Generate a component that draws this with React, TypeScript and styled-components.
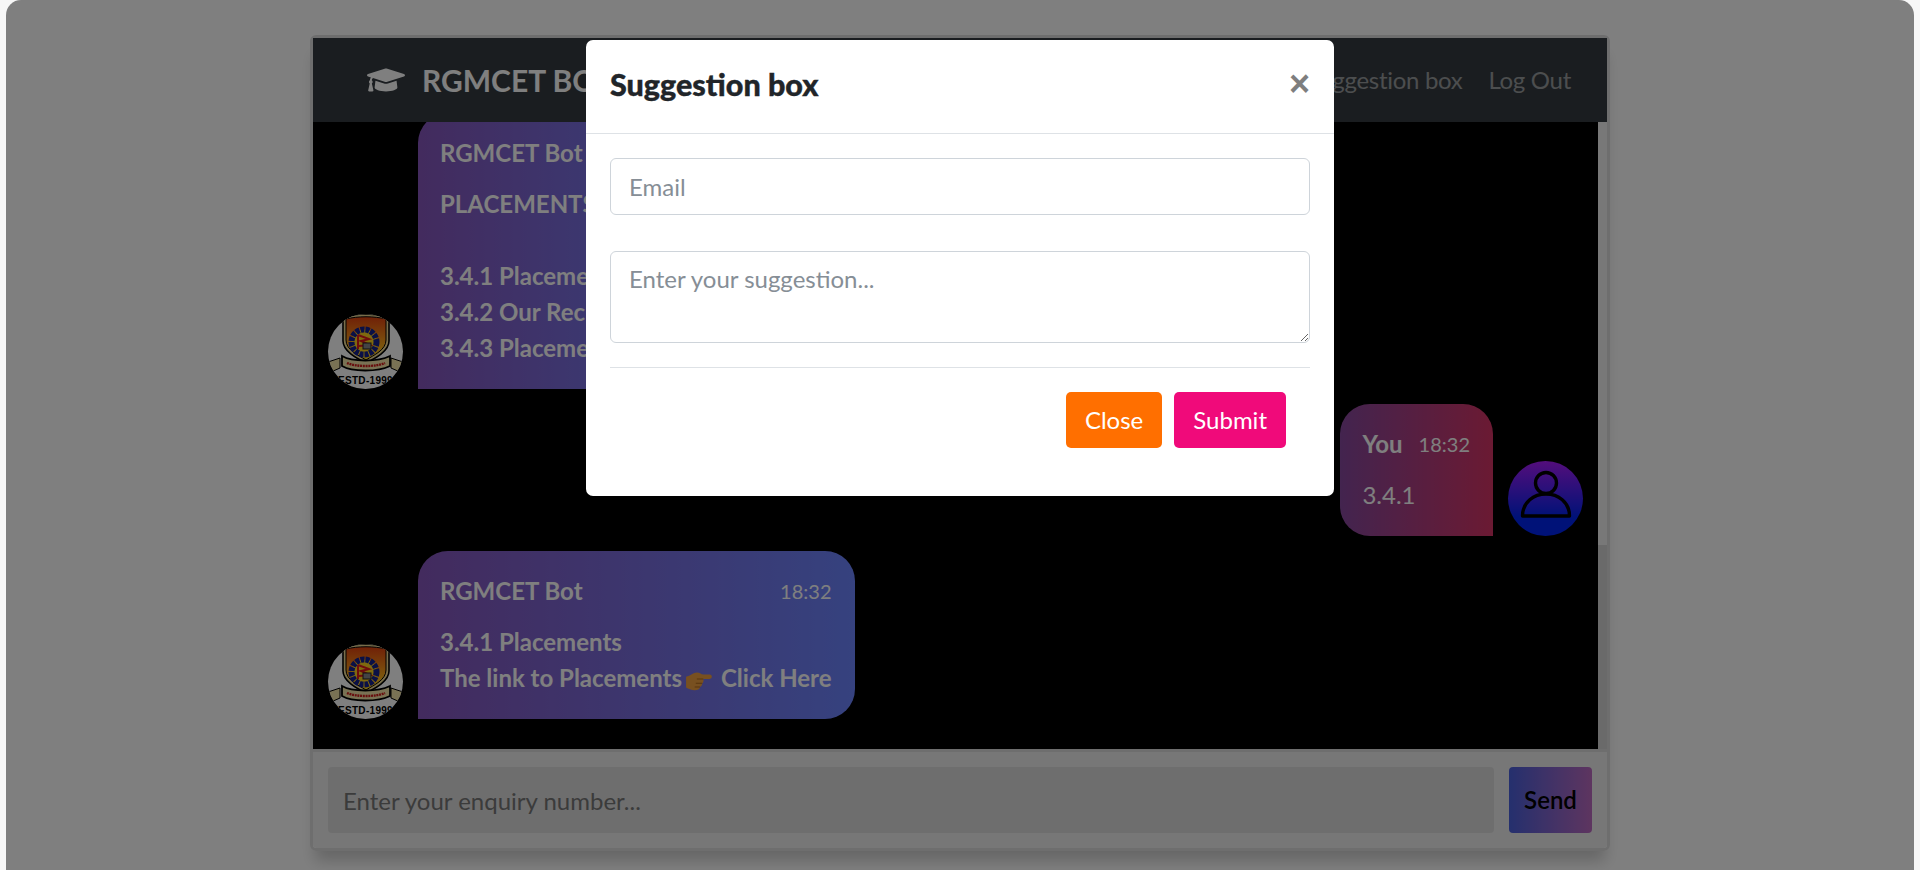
import React from "react";
import styled, { createGlobalStyle } from "styled-components";
import { FaGraduationCap } from "react-icons/fa";

const GlobalStyle = createGlobalStyle`
  * { box-sizing: border-box; }
  html, body { margin: 0; height: 870px; overflow: hidden; background: #f7f7f7; }
  body { font-family: "Lato", "Open Sans", sans-serif; font-size: 24px; line-height: 36px; }
`;

/* Page */
const Page = styled.div`
  position: relative;
  height: 870px;
  margin: 0 6px;
  padding-top: 35px;
  background: #fff;
  border-radius: 15px 15px 0 0;
  overflow: hidden;
`;
const Backdrop = styled.div`
  position: absolute;
  inset: 0;
  display: flex;
  justify-content: center;
  align-items: flex-start;
  padding-top: 40px;
  background: rgba(0, 0, 0, 0.5);
`;

/* Chat window */
const ChatWindow = styled.section`
  display: flex;
  flex-direction: column;
  width: 1300px;
  height: 816px;
  margin: 0 auto;
  border: 3px solid #ddd;
  border-radius: 6px;
  box-shadow: 0 15px 15px -5px rgba(0, 0, 0, 0.2);
`;
const Navbar = styled.header`
  display: flex;
  justify-content: space-between;
  align-items: center;
  height: 84px;
  flex-shrink: 0;
  padding: 0 36px 0 54px;
  background: #343a40;
`;
const Brand = styled.div`
  display: flex;
  align-items: center;
  gap: 17px;
  color: #fff;
  font-size: 30px;
  font-weight: 700;
  line-height: 45px;
  svg { font-size: 38px; }
`;
const NavLinks = styled.nav`
  display: flex;
  gap: 26px;
`;
const NavLink = styled.a`
  color: rgba(255, 255, 255, 0.5);
  letter-spacing: -0.3px;
`;
const ChatBody = styled.div`
  flex: 1;
  display: flex;
  min-height: 0;
`;
const Messages = styled.main`
  flex: 1;
  min-width: 0;
  display: flex;
  flex-direction: column;
  justify-content: flex-end;
  gap: 15px;
  padding: 0 15px 30px;
  background: #000;
  overflow: hidden;
`;
const ScrollTrack = styled.div`
  width: 9px;
  display: flex;
  flex-direction: column;
  justify-content: flex-end;
  background: #f1f1f1;
`;
const ScrollThumb = styled.div`
  height: 204px;
  background: #d4d4d4;
`;
const MessageRow = styled.div<{ $mine?: boolean }>`
  display: flex;
  flex-shrink: 0;
  align-items: flex-end;
  gap: 15px;
  justify-content: ${(p) => (p.$mine ? "flex-end" : "flex-start")};
`;
const Avatar = styled.div<{ $mine?: boolean }>`
  width: 75px;
  height: 75px;
  flex-shrink: 0;
  border-radius: 50%;
  overflow: hidden;
  background: ${(p) => (p.$mine ? "linear-gradient(to top, #0024f0 25%, #a81cf8)" : "#fff")};
  svg { display: block; }
`;
const Bubble = styled.div<{ $mine?: boolean }>`
  padding: 22px 23px 23px 22px;
  color: #fff;
  border-radius: ${(p) => (p.$mine ? "30px 30px 0 30px" : "30px 30px 30px 0")};
  background: ${(p) =>
    p.$mine
      ? "linear-gradient(to right, #86489e, #d63466)"
      : "linear-gradient(to right, #8656bc, #6c84fe)"};
`;
const BubbleHead = styled.div`
  display: flex;
  justify-content: space-between;
  align-items: center;
  gap: 16px;
  margin-bottom: 15px;
`;
const Name = styled.span`
  font-weight: 700;
`;
const Time = styled.span`
  font-size: 20px;
`;
const BubbleText = styled.div<{ $plain?: boolean }>`
  font-weight: ${(p) => (p.$plain ? 400 : 700)};
  white-space: nowrap;
`;
const HandIcon = styled.svg`
  width: 28px;
  height: 26px;
  vertical-align: -6px;
  margin: 0 8px 0 3px;
`;
const ComposeBar = styled.form`
  display: flex;
  flex-shrink: 0;
  gap: 15px;
  height: 99px;
  padding: 15px;
  background: #eee;
  border-top: 3px solid #ddd;
  border-radius: 0 0 4px 4px;
`;
const ComposeInput = styled.input`
  flex: 1;
  height: 66px;
  padding: 0 15px;
  border: 0;
  border-radius: 4px;
  background: #ddd;
  font: inherit;
  &::placeholder { color: #777; opacity: 1; }
`;
const SendButton = styled.button`
  width: 83px;
  height: 66px;
  padding: 0;
  border: 0;
  border-radius: 4px;
  color: #000;
  font: inherit;
  font-weight: 600;
  background: linear-gradient(to right, #4a60dc, #bc6ac0);
`;

/* Modal */
const Modal = styled.div`
  width: 748px;
  background: #fff;
  border-radius: 7px;
  color: #212529;
`;
const ModalHeader = styled.div`
  display: flex;
  justify-content: space-between;
  align-items: center;
  height: 94px;
  padding: 0 24px 5px;
  border-bottom: 1px solid #dee2e6;
`;
const ModalTitle = styled.h5`
  margin: 0;
  font-size: 30.5px;
  font-weight: 900;
  line-height: 42px;
  -webkit-text-stroke: 0.4px #212529;
`;
const CloseIcon = styled.button`
  padding: 0;
  border: 0;
  background: none;
  color: #000;
  opacity: 0.5;
  font: 700 36px/36px "Liberation Sans", sans-serif;
`;
const ModalForm = styled.form`
  padding: 24px;
`;
const Field = styled.input`
  display: block;
  width: 100%;
  height: 57px;
  margin-bottom: 36px;
  padding: 0 18px;
  border: 1px solid #ced4da;
  border-radius: 6px;
  font: inherit;
  &::placeholder { color: #868e96; opacity: 1; }
`;
const TextArea = styled.textarea`
  display: block;
  width: 100%;
  height: 92px;
  padding: 9px 18px;
  border: 1px solid #ced4da;
  border-radius: 6px;
  font: inherit;
  &::placeholder { color: #868e96; opacity: 1; }
`;
const ModalFooter = styled.div`
  display: flex;
  justify-content: flex-end;
  gap: 12px;
  margin-top: 24px;
  padding: 24px;
  border-top: 1px solid #dee2e6;
`;
const ActionButton = styled.button<{ $bg: string }>`
  height: 56px;
  padding: 0 19px;
  border: 0;
  border-radius: 5px;
  color: #fff;
  font: inherit;
  background: ${(p) => p.$bg};
`;

const Crest = () => (
  <svg width="75" height="75" viewBox="0 0 75 75">
    <defs>
      <linearGradient id="shield" x1="0" y1="0" x2="0" y2="1">
        <stop offset="0" stopColor="#e0400f" />
        <stop offset="0.5" stopColor="#f49018" />
        <stop offset="1" stopColor="#ffdc1e" />
      </linearGradient>
    </defs>
    <path d="M15 3 C28 -1 46 -1 61 3 V27 C61 37 48 44 38 49 C28 44 15 37 15 27 Z" fill="#f2dd96" stroke="#000" strokeWidth="1.600" />
    <path d="M18 5 C30 2 46 2 58 5 V26 C58 36 46 41 38 46 C30 41 18 36 18 26 Z" fill="url(#shield)" stroke="#000" />
    <circle cx="36" cy="28" r="12.500" fill="#ffd21e" stroke="#14208c" strokeWidth="6" strokeDasharray="4 1" />
    <path d="M30 21 V35 M30 21 L41 25 L33 27 L42 31 L31 32" fill="none" stroke="#e01818" strokeWidth="2" />
    <rect x="35" y="29" width="8" height="6" fill="#888" stroke="#222" />
    <path d="M0 48 L12 44 V54 L3 58 Z M75 48 L63 44 V54 L72 58 Z" fill="#f2e4a8" stroke="#000" />
    <path d="M14 42 C24 48 50 48 62 42 V52 C50 58 24 58 14 52 Z" fill="#f2e4a8" stroke="#000" strokeWidth="1.800" />
    <path d="M19 49 C28 53 48 53 57 49" fill="none" stroke="#d01818" strokeWidth="2.400" strokeDasharray="2 0.700" />
    <text x="37.500" y="70" textAnchor="middle" fontFamily="Liberation Sans, sans-serif" fontSize="10" fontWeight="700" letterSpacing="0.3" fill="#000">ESTD-1999</text>
  </svg>
);

const PersonIcon = () => (
  <svg width="75" height="75" viewBox="0 0 75 75" fill="none" stroke="#000" strokeWidth="3.400" strokeLinejoin="round">
    <circle cx="38" cy="22" r="10.500" />
    <path d="M14.500 55 C14.500 41 26 33 38 33 C50 33 61.500 41 61.500 55 Z" />
  </svg>
);

const Hand = () => (
  <HandIcon viewBox="0 0 26 24">
    <path
      d="M1 9 C5 8 8 5 11 5 C14 5 15 7 17 7 L23 7 C25.500 7 25.500 11 23 11 L17 11 C17.500 13 17 14.500 16 15 C16 17 15 18 14 18.500 C13.500 20.500 12 21.500 9 21.500 C6 21.500 3 20 1 19 Z"
      fill="#f0a040"
    />
    <path d="M11 11 H17 M10 15 H16 M9 18.500 H14" stroke="#b06a1c" strokeWidth="1" fill="none" />
  </HandIcon>
);

const App = () => {
  return (
    <>
      <GlobalStyle />
      <Page>
        <ChatWindow>
          <Navbar>
            <Brand>
              <FaGraduationCap />
              RGMCET BOT
            </Brand>
            <NavLinks>
              <NavLink>Suggestion box</NavLink>
              <NavLink>Log Out</NavLink>
            </NavLinks>
          </Navbar>

          <ChatBody>
            <Messages>
              <MessageRow>
                <Avatar><Crest /></Avatar>
                <Bubble>
                  <BubbleHead>
                    <Name>RGMCET Bot</Name>
                    <Time>18:32</Time>
                  </BubbleHead>
                  <BubbleText>
                    PLACEMENTS
                    <br />
                    <br />
                    3.4.1 Placements
                    <br />
                    3.4.2 Our Recruiters
                    <br />
                    3.4.3 Placement Statistics
                  </BubbleText>
                </Bubble>
              </MessageRow>

              <MessageRow $mine>
                <Bubble $mine>
                  <BubbleHead>
                    <Name>You</Name>
                    <Time>18:32</Time>
                  </BubbleHead>
                  <BubbleText $plain>3.4.1</BubbleText>
                </Bubble>
                <Avatar $mine><PersonIcon /></Avatar>
              </MessageRow>

              <MessageRow>
                <Avatar><Crest /></Avatar>
                <Bubble>
                  <BubbleHead>
                    <Name>RGMCET Bot</Name>
                    <Time>18:32</Time>
                  </BubbleHead>
                  <BubbleText>
                    3.4.1 Placements
                    <br />
                    The link to Placements
                    <Hand />
                    Click Here
                  </BubbleText>
                </Bubble>
              </MessageRow>
            </Messages>
            <ScrollTrack>
              <ScrollThumb />
            </ScrollTrack>
          </ChatBody>

          <ComposeBar>
            <ComposeInput placeholder="Enter your enquiry number..." />
            <SendButton type="button">Send</SendButton>
          </ComposeBar>
        </ChatWindow>

        <Backdrop>
          <Modal>
            <ModalHeader>
              <ModalTitle>Suggestion box</ModalTitle>
              <CloseIcon type="button">×</CloseIcon>
            </ModalHeader>
            <ModalForm>
              <Field placeholder="Email" />
              <TextArea placeholder="Enter your suggestion..." />
              <ModalFooter>
                <ActionButton type="button" $bg="#ff6f00">Close</ActionButton>
                <ActionButton type="button" $bg="#f00a7a">Submit</ActionButton>
              </ModalFooter>
            </ModalForm>
          </Modal>
        </Backdrop>
      </Page>
    </>
  );
};

export default App;
